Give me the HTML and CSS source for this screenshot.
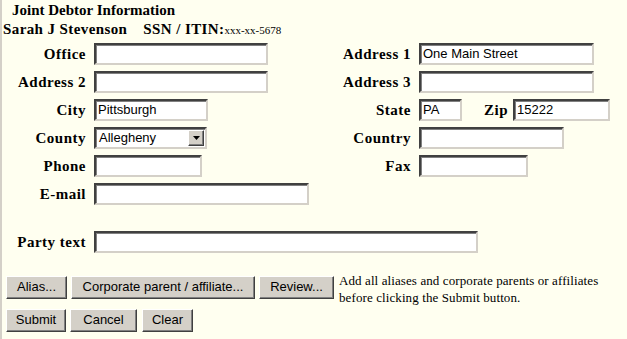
FILE: index.html
```html
<!DOCTYPE html>
<html>
<head>
<meta charset="utf-8">
<link rel="stylesheet" href="styles.css">
</head>
<body>
<div class="page">
  <div class="title">Joint Debtor Information</div>
  <div class="debtor"><span class="name">Sarah J Stevenson</span><span class="ssn">SSN / ITIN:</span><span class="ssn-num">xxx-xx-5678</span></div>

  <div class="form">
    <label class="lbl">Office</label>
    <div class="fld"><span class="input w174"></span></div>
    <label class="lbl">Address 1</label>
    <div class="fld"><span class="input w175">One Main Street</span></div>

    <label class="lbl">Address 2</label>
    <div class="fld"><span class="input w174"></span></div>
    <label class="lbl">Address 3</label>
    <div class="fld"><span class="input w175"></span></div>

    <label class="lbl">City</label>
    <div class="fld"><span class="input w114">Pittsburgh</span></div>
    <label class="lbl">State</label>
    <div class="fld state-zip"><span class="input w43">PA</span><label class="lbl zip">Zip</label><span class="input w97">15222</span></div>

    <label class="lbl">County</label>
    <div class="fld"><span class="select"><span class="select-val">Allegheny</span><span class="select-btn"><svg width="7" height="4" viewBox="0 0 7 4"><path d="M0 0h7L3.5 4z" fill="#000"/></svg></span></span></div>
    <label class="lbl">Country</label>
    <div class="fld"><span class="input w145"></span></div>

    <label class="lbl">Phone</label>
    <div class="fld"><span class="input w108"></span></div>
    <label class="lbl">Fax</label>
    <div class="fld"><span class="input w109"></span></div>

    <label class="lbl">E-mail</label>
    <div class="fld"><span class="input w216"></span></div>
    <div></div><div></div>

    <label class="lbl party">Party text</label>
    <div class="fld party wide"><span class="input w384"></span></div>
  </div>

  <div class="actions">
    <span class="btn b-alias">Alias...</span>
    <span class="btn b-corp">Corporate parent / affiliate...</span>
    <span class="btn b-review">Review...</span>
    <span class="note">Add all aliases and corporate parents or affiliates<br>before clicking the Submit button.</span>
  </div>
  <div class="actions second">
    <span class="btn b-submit">Submit</span>
    <span class="btn b-cancel">Cancel</span>
    <span class="btn b-clear">Clear</span>
  </div>
</div>
</body>
</html>
```
FILE: styles.css
```css
html, body {
  margin: 0;
  padding: 0;
}
body {
  background: #fffff0;
  font-family: "Liberation Serif", "Times New Roman", serif;
  color: #000;
}
.page {
  border-left: 2px solid #d4d0c8;
  min-height: 339px;
  box-sizing: border-box;
}
.title {
  font-weight: bold;
  font-size: 15px;
  line-height: 18px;
  padding-left: 10px;
  padding-top: 1px;
}
.debtor {
  font-weight: bold;
  font-size: 15px;
  line-height: 18px;
  padding-left: 1px;
  margin-top: 1px;
  letter-spacing: 0.4px;
}
.debtor .ssn {
  margin-left: 16px;
}
.debtor .ssn-num {
  font-weight: normal;
  font-size: 11px;
  letter-spacing: 0;
}
.form {
  display: grid;
  grid-template-columns: 84px 215px 94px auto;
  column-gap: 8px;
  row-gap: 6px;
  margin-top: 4px;
  align-items: center;
}
.lbl {
  font-weight: bold;
  font-size: 15px;
  text-align: right;
  letter-spacing: 0.5px;
}
.fld {
  display: flex;
  align-items: center;
}
.input {
  display: block;
  box-sizing: border-box;
  height: 22px;
  background: #fff;
  border-style: solid;
  border-width: 2px;
  border-color: #404040 #d4d0c8 #d4d0c8 #404040;
  box-shadow: inset 1px 1px 0 #808080;
  font-family: "Liberation Sans", Arial, sans-serif;
  font-size: 13px;
  line-height: 18px;
  padding-left: 2px;
  white-space: nowrap;
}
.w43 { width: 43px; }
.w97 { width: 97px; }
.w108 { width: 108px; }
.w109 { width: 109px; }
.w114 { width: 114px; }
.w145 { width: 145px; }
.w174 { width: 174px; }
.w175 { width: 175px; }
.w216 { width: 216px; }
.w384 { width: 384px; }
.state-zip .zip {
  margin-left: 22px;
  margin-right: 5px;
}
.select {
  display: flex;
  box-sizing: border-box;
  width: 113px;
  height: 22px;
  background: #fff;
  border-style: solid;
  border-width: 2px;
  border-color: #404040 #d4d0c8 #d4d0c8 #404040;
  box-shadow: inset 1px 1px 0 #808080;
  font-family: "Liberation Sans", Arial, sans-serif;
  font-size: 13px;
  line-height: 18px;
}
.select-val {
  flex: 1;
  padding-left: 3px;
}
.select-btn {
  width: 16px;
  height: 16px;
  margin: 1px 1px 1px 0;
  box-sizing: border-box;
  background: #d4d0c8;
  border-style: solid;
  border-width: 1px;
  border-color: #fff #404040 #404040 #fff;
  box-shadow: inset -1px -1px 0 #808080;
  display: flex;
  align-items: center;
  justify-content: center;
}
.party {
  margin-top: 20px;
}
.wide {
  grid-column: 2 / 5;
}
.actions {
  display: flex;
  align-items: flex-start;
  gap: 4px;
  padding-left: 4px;
  margin-top: 23px;
}
.actions.second {
  margin-top: 10px;
}
.btn {
  display: block;
  box-sizing: border-box;
  height: 23px;
  padding: 0;
  text-align: center;
  background: #d4d0c8;
  border-style: solid;
  border-width: 1px;
  border-color: #fff #404040 #404040 #fff;
  box-shadow: inset -1px -1px 0 #808080;
  font-family: "Liberation Sans", Arial, sans-serif;
  font-size: 13px;
  line-height: 20px;
  white-space: nowrap;
}
.b-alias { width: 61px; }
.b-corp { width: 184px; }
.b-review { width: 75px; }
.b-submit { width: 60px; }
.b-cancel { width: 67px; margin-left: 0; }
.b-clear { width: 51px; margin-left: 1px; }
.note {
  font-size: 13px;
  line-height: 17px;
  margin-top: -4px;
  margin-bottom: -7px;
  margin-left: 1px;
  letter-spacing: 0.1px;
}
```
